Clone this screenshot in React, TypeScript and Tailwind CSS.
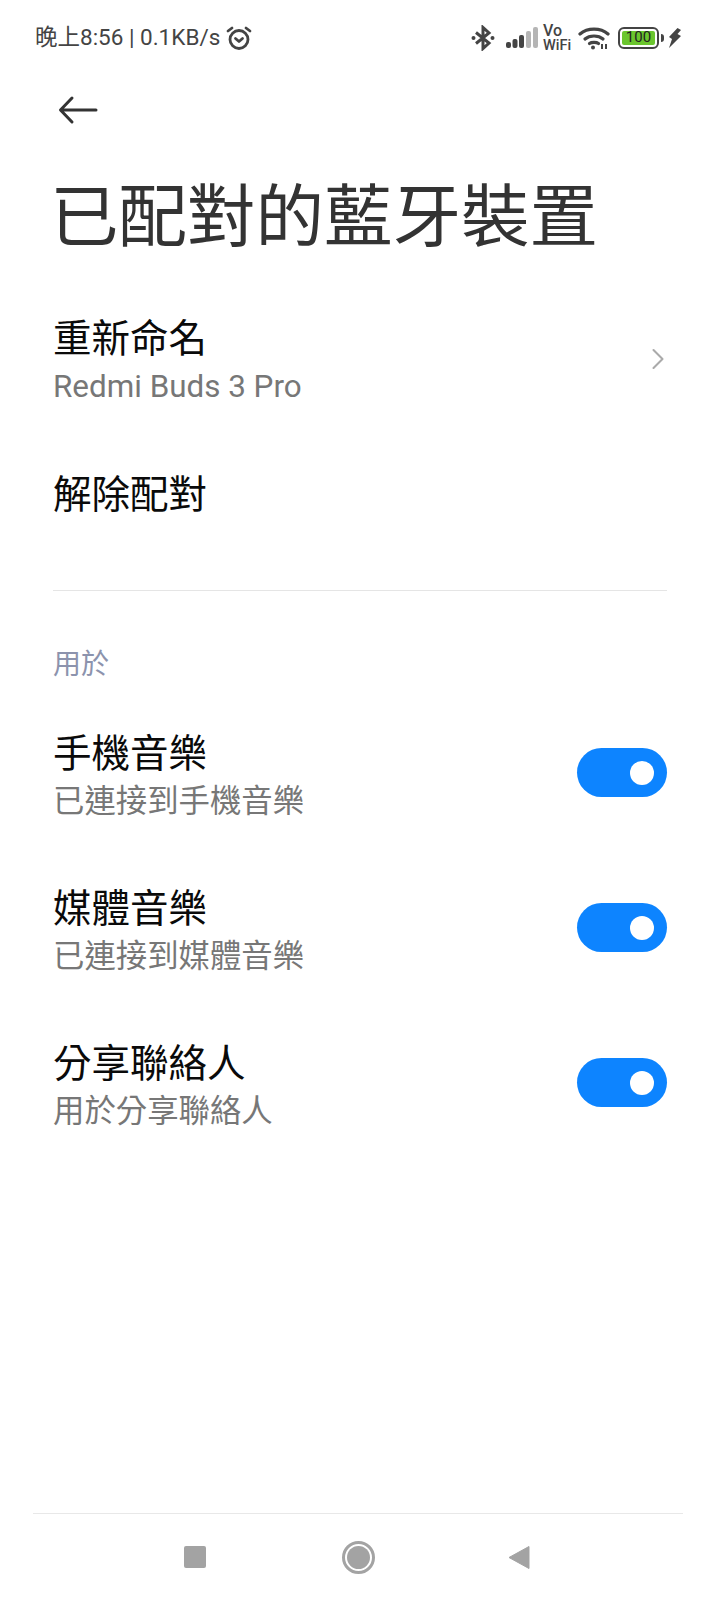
import { ChevronRight } from 'lucide-react'

const font = "font-['Roboto','Noto_Sans_CJK_TC',sans-serif]"

function Toggle() {
  return (
    <div className="w-[90px] h-[49px] rounded-full bg-[#0d84ff] flex items-center justify-end pr-[13px] shrink-0">
      <span className="w-6 h-6 rounded-full bg-white" />
    </div>
  )
}

function SwitchRow({ title, sub }: { title: string; sub: string }) {
  return (
    <div className="h-[155px] flex items-center justify-between">
      <div className="flex flex-col pt-[10px]">
        <span className="text-[38.500px] leading-[48px] text-[#0a0a0a]">{title}</span>
        <span className="text-[31.400px] leading-[48px] text-[#777777]">{sub}</span>
      </div>
      <Toggle />
    </div>
  )
}

function StatusBar() {
  return (
    <div className="h-[75px] pl-[35px] pr-[38px] flex items-center justify-between text-[#444444]">
      <div className="flex items-center gap-[6px]">
        <span className="text-[22.500px] leading-none">晚上8:56 | 0.1KB/s</span>
        <svg width="26" height="26" viewBox="0 0 26 26" fill="none" stroke="#444444" strokeWidth="2.8" strokeLinecap="round" strokeLinejoin="round">
          <circle cx="13" cy="14.500" r="9" />
          <path d="M9.500 13.500l3.500 3 3.500-3" />
          <path d="M2 6l4-3M24 6l-4-3" />
        </svg>
      </div>
      <div className="flex items-center">
        <svg width="24" height="26" viewBox="0 0 24 26" fill="none" stroke="#444444" strokeWidth="3">
          <path d="M5 7.500l13 10.500-6 5.500V2.500l6 5.500L5 18.500" />
          <circle cx="2.500" cy="13" r="2" fill="#444444" stroke="none" />
          <circle cx="21.500" cy="13" r="2" fill="#444444" stroke="none" />
        </svg>
        <svg className="ml-[11px]" width="32" height="21" viewBox="0 0 32 21">
          <rect x="0" y="15" width="5" height="6" rx="2" fill="#444444" />
          <rect x="6.500" y="12" width="5" height="9" rx="2" fill="#444444" />
          <rect x="13" y="8" width="5" height="13" rx="2" fill="#444444" />
          <rect x="20" y="4" width="5" height="17" rx="2" fill="#b5b5b5" />
          <rect x="27" y="0" width="5" height="21" rx="2" fill="#b5b5b5" />
        </svg>
        <div className="ml-[5px] w-[30px] flex flex-col items-start text-[14.500px] leading-[15px] font-medium">
          <span className="text-[16px]">Vo</span>
          <span>WiFi</span>
        </div>
        <svg className="ml-[5px]" width="32" height="24" viewBox="0 0 32 24" fill="none" stroke="#444444" strokeWidth="3.200" strokeLinecap="round">
          <path d="M2 8c7.500-6.500 20.500-6.500 28 0" />
          <path d="M7 13c4.500-4 13.500-4 18 0" />
          <path d="M11.500 17.500c2-1.500 7-1.500 9 0" />
          <circle cx="15" cy="21.500" r="2" fill="#444444" stroke="none" />
          <path d="M24 18v5M28 18v5" strokeWidth="2" strokeLinecap="butt" />
        </svg>
        <div className="ml-[8px] w-[41px] h-[22px] rounded-[6px] border-2 border-[#444444] p-[2px] flex">
          <div className="flex-1 rounded-[2px] bg-[#6bc62e] flex items-center justify-center text-[15px] leading-none text-[#222222]">100</div>
        </div>
        <span className="ml-[2px] w-[3px] h-2 rounded-r-sm bg-[#444444]" />
        <svg className="ml-[4px]" width="14" height="20" viewBox="0 0 14 20" fill="#444444">
          <path d="M9.500 0L1 9l3 2-3 9 12-12-3.500-2L13 2z" />
        </svg>
      </div>
    </div>
  )
}

export default function App() {
  return (
    <div className={`${font} w-[720px] h-[1600px] bg-white flex flex-col`}>
      <StatusBar />

      {/* Back + title */}
      <div className="pl-[50px] pr-[53px]">
        <svg className="ml-[8px] mt-[20px]" width="40" height="30" viewBox="0 0 40 30" fill="none" stroke="#333333" strokeWidth="3" strokeLinecap="round" strokeLinejoin="round">
          <path d="M38 15H3M14 3L2.500 15 14 27" />
        </svg>
        <h1 className="mt-[53px] text-[68.500px] leading-[80px] whitespace-nowrap text-[#333333] font-normal">已配對的藍牙裝置</h1>
      </div>

      <div className="px-[53px] mt-[46px] flex-1 flex flex-col">
        <div className="h-[118px] flex items-center justify-between">
          <div className="flex flex-col">
            <span className="text-[38.500px] leading-[48px] text-[#0a0a0a]">重新命名</span>
            <span className="text-[31.400px] leading-[48px] text-[#777777]">Redmi Buds 3 Pro</span>
          </div>
          <ChevronRight className="mr-[-9px] mb-[8px]" size={36} strokeWidth={1.4} color="#aaaaaa" />
        </div>
        <div className="mt-[49px] text-[38.500px] leading-[48px] text-[#0a0a0a]">解除配對</div>
        <div className="mt-[71px] h-px bg-[#e5e5e5]" />
        <div className="mt-[56px] text-[28px] leading-[36px] text-[#8c93ad]">用於</div>
        <div className="mt-[12px] flex flex-col">
          <SwitchRow title="手機音樂" sub="已連接到手機音樂" />
          <SwitchRow title="媒體音樂" sub="已連接到媒體音樂" />
          <SwitchRow title="分享聯絡人" sub="用於分享聯絡人" />
        </div>
      </div>

      {/* Nav bar */}
      <div className="ml-[33px] mr-[37px] h-[87px] border-t border-[#e8e8e8] flex items-center justify-center pr-[3px]">
        <span className="w-[22px] h-[22px] rounded-[2px] bg-[#a3a3a3]" />
        <span className="ml-[136px] w-[33px] h-[33px] rounded-full border-[3px] border-[#a3a3a3] p-[2px] flex">
          <span className="flex-1 rounded-full bg-[#a3a3a3]" />
        </span>
        <svg className="ml-[133px]" width="22" height="25" viewBox="0 0 22 25">
          <path d="M21 1.500v22L1 12.500z" fill="#a3a3a3" stroke="#a3a3a3" strokeWidth="1" strokeLinejoin="round" />
        </svg>
      </div>
    </div>
  )
}
